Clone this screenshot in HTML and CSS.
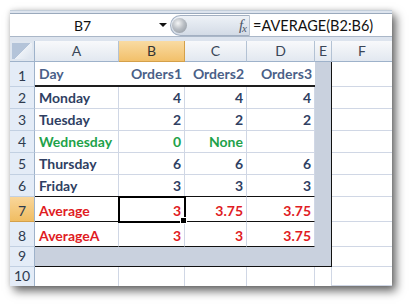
FILE: index.html
```html
<!DOCTYPE html>
<html>
<head>
<meta charset="utf-8">
<link rel="stylesheet" href="styles.css">
</head>
<body>
<div class="win">
  <div class="fbar">
    <div class="fbox">
      <div class="namebox">B7</div>
      <div class="dd"><span class="tri"></span></div>
      <div class="caps"><span class="knob"></span><span class="fx"><i>f</i><i class="x">x</i></span></div>
      <div class="formula">=AVERAGE(B2:B6)</div>
    </div>
  </div>
  <div class="sheet">
    <div class="corner"><span class="ctri"></span></div>
    <div class="ch">A</div><div class="ch sel">B</div><div class="ch">C</div><div class="ch">D</div><div class="ch">E</div><div class="ch last">F</div>

    <div class="rh">1</div>
    <div class="c hd r1">Day</div><div class="c hd r1 n">Orders1</div><div class="c hd r1 n">Orders2</div><div class="c hd r1 n">Orders3</div><div class="sh e"></div><div class="f"></div>

    <div class="rh">2</div>
    <div class="c">Monday</div><div class="c n">4</div><div class="c n">4</div><div class="c n">4</div><div class="sh e"></div><div class="f"></div>

    <div class="rh">3</div>
    <div class="c">Tuesday</div><div class="c n">2</div><div class="c n">2</div><div class="c n">2</div><div class="sh e"></div><div class="f"></div>

    <div class="rh">4</div>
    <div class="c g">Wednesday</div><div class="c n g">0</div><div class="c n g">None</div><div class="c n"></div><div class="sh e"></div><div class="f"></div>

    <div class="rh">5</div>
    <div class="c">Thursday</div><div class="c n">6</div><div class="c n">6</div><div class="c n">6</div><div class="sh e"></div><div class="f"></div>

    <div class="rh">6</div>
    <div class="c k">Friday</div><div class="c n k">3</div><div class="c n k">3</div><div class="c n k">3</div><div class="sh e"></div><div class="f"></div>

    <div class="rh sel">7</div>
    <div class="c k red">Average</div><div class="c n k red active">3</div><div class="c n k red">3.75</div><div class="c n k red">3.75</div><div class="sh e"></div><div class="f"></div>

    <div class="rh">8</div>
    <div class="c k red">AverageA</div><div class="c n k red">3</div><div class="c n k red">3</div><div class="c n k red">3.75</div><div class="sh e"></div><div class="f"></div>

    <div class="rh">9</div>
    <div class="sh b"></div><div class="sh b"></div><div class="sh b"></div><div class="sh b"></div><div class="sh b e"></div><div class="f"></div>

    <div class="rh bot">10</div>
    <div class="w"></div><div class="w"></div><div class="w"></div><div class="w"></div><div class="w"></div><div class="f"></div>
  </div>
</div>
</body>
</html>
```

FILE: styles.css
```css
html, body {
  margin: 0;
  padding: 0;
  background: #ffffff;
}
body {
  font-family: Lato, "Open Sans", sans-serif;
  width: 409px;
  height: 304px;
  overflow: hidden;
}
.win {
  margin: 10px 0 0 10px;
  width: 382px;
  height: 276px;
  overflow: hidden;
  box-shadow: 4px 5px 9px rgba(0,0,0,0.6), 0 0 5px rgba(0,0,0,0.12);
  background: #fff;
}
.fbar {
  height: 31px;
  box-sizing: border-box;
  background: #dde4ee;
  padding: 2px 0 4px 0;
  border-top: 1px solid #c3ceda;
}
.fbox {
  height: 24px;
  box-sizing: border-box;
  background: #fff;
  border-top: 1px solid #9aa9bc;
  border-bottom: 1px solid #aab7c8;
  display: flex;
  align-items: center;
}
.namebox {
  width: 145px;
  text-align: center;
  font-size: 14px;
  color: #111;
}
.dd {
  width: 15px;
  display: flex;
  justify-content: center;
}
.tri {
  width: 0;
  height: 0;
  border-left: 4px solid transparent;
  border-right: 4px solid transparent;
  border-top: 4px solid #111;
}
.caps {
  width: 80px;
  height: 21px;
  box-sizing: border-box;
  border-radius: 11px 0 0 11px;
  background: linear-gradient(#eef2f7, #d3dbe6);
  border: 1px solid #a3b0c2;
  border-right: 1px solid #b9c4d2;
  display: flex;
  align-items: center;
  justify-content: space-between;
  padding: 0 2px 0 1px;
}
.knob {
  width: 15px;
  height: 15px;
  border-radius: 50%;
  background: radial-gradient(circle at 40% 35%, #f4f5f6 0%, #b9bec4 45%, #8b939c 100%);
}
.fx {
  font-family: "Liberation Serif", serif;
  font-size: 15px;
  color: #4c5566;
  display: flex;
  align-items: flex-end;
}
.fx .x {
  font-size: 11px;
  margin-left: -1px;
}
.formula {
  flex: 1;
  padding-left: 3px;
  font-size: 14.5px;
  color: #111;
}
.sheet {
  display: grid;
  grid-template-columns: 25px 84px 66px 62px 68px 17px 60px;
  grid-template-rows: 21px 25px 22px 22px 22px 22px 22px 25px 25px 20px 19px;
}
.sheet > div {
  box-sizing: border-box;
}
.corner {
  background: #dfe6ef;
  border-right: 1px solid #9eb2ca;
  border-bottom: 1px solid #9eb2ca;
  padding: 2px;
  display: flex;
}
.ctri {
  flex: 1;
  background: linear-gradient(135deg, #b4c4d9 0%, #b4c4d9 50%, #eef2f7 50%, #dbe3ee 100%);
}
.ch {
  background: linear-gradient(#f8f9fb, #e2e8f0);
  border-right: 1px solid #b3c2d4;
  border-bottom: 1px solid #9eb2ca;
  text-align: center;
  font-size: 14px;
  line-height: 20px;
  color: #3a4658;
}
.ch.last { border-right: none; }
.ch.sel {
  background: linear-gradient(#f9dba3, #f2c06a);
  border-right: 1px solid #d4a04a;
  border-bottom: 1px solid #d4a04a;
  color: #333;
}
.rh {
  background: #e4ecf7;
  border-right: 1px solid #9eb2ca;
  border-bottom: 1px solid #c2d0e2;
  font-size: 14px;
  color: #2e3b4e;
  display: flex;
  align-items: flex-end;
  justify-content: center;
  padding-bottom: 2px;
}
.rh.sel {
  background: linear-gradient(#f9d69a, #f0bd62);
  border-bottom: 1px solid #d4a04a;
}
.rh.bot { border-bottom: none; }
.c {
  background: #fff;
  border-right: 1px solid #d0d7e5;
  border-bottom: 1px solid #d0d7e5;
  font-size: 14px;
  font-weight: 700;
  color: #2f3f63;
  display: flex;
  align-items: flex-end;
  padding: 0 4px 2px 4px;
  white-space: nowrap;
}
.c.n {
  justify-content: flex-end;
  padding-right: 3px;
}
.c.hd {
  color: #4a5f88;
  border-right: none;
  border-bottom: 2px solid #1e1e1e;
  padding-bottom: 3px;
}
.c.g { color: #1ea24a; }
.c.red { color: #e01c23; }
.c.k { border-bottom: 1px solid #111; }
.c.active {
  position: relative;
  outline: 2px solid #000;
  outline-offset: -1px;
}
.c.active::after {
  content: "";
  position: absolute;
  right: -3px;
  bottom: -3px;
  width: 5px;
  height: 5px;
  background: #000;
  border: 1px solid #fff;
}
.sh {
  background: #c9d1de;
}
.sh.e { border-right: 1px solid #111; }
.sh.b { border-bottom: 1px solid #111; }
.f {
  background: #fff;
  border-bottom: 1px solid #d0d7e5;
}
.w {
  background: #fff;
  border-right: 1px solid #d0d7e5;
}
```
